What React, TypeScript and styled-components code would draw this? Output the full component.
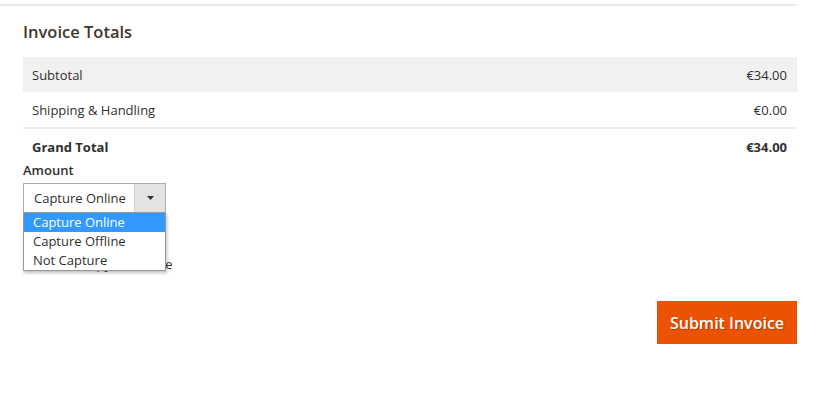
import styled, { createGlobalStyle } from "styled-components";

const GlobalStyle = createGlobalStyle`
  body {
    margin: 0;
    background: #ffffff;
    font-family: "Open Sans", "Liberation Sans", sans-serif;
    color: #303030;
  }
`;

const totals = [
  { label: "Subtotal", value: "€34.00", shaded: true },
  { label: "Shipping & Handling", value: "€0.00", shaded: false },
];

const options = ["Capture Online", "Capture Offline", "Not Capture"];

export default function App() {
  return (
    <>
      <GlobalStyle />
      <Page>
        <Section>
          <Title>Invoice Totals</Title>
          <Table>
            {totals.map((row) => (
              <Row key={row.label} $shaded={row.shaded}>
                <Cell>{row.label}</Cell>
                <Cell>{row.value}</Cell>
              </Row>
            ))}
            <Divider />
            <GrandRow>
              <Cell>Grand Total</Cell>
              <Cell>€34.00</Cell>
            </GrandRow>
          </Table>

          <Label>Amount</Label>
          <SelectWrap>
            <Select>
              <SelectText>Capture Online</SelectText>
              <Arrow>
                <svg width="7" height="4" viewBox="0 0 7 4">
                  <path d="M0 0 L7 0 L3.5 4 Z" fill="#333" />
                </svg>
              </Arrow>
            </Select>
            <Menu>
              {options.map((opt, i) => (
                <Option key={opt} $active={i === 0}>
                  {opt}
                </Option>
              ))}
            </Menu>
          </SelectWrap>

          <CheckLine>
            <Box />
            <span>Email Copy of Invoice</span>
          </CheckLine>

          <Actions>
            <SubmitButton>Submit Invoice</SubmitButton>
          </Actions>
        </Section>
      </Page>
    </>
  );
}

const Page = styled.div`
  width: 820px;
  height: 400px;
  overflow: hidden;
  padding-top: 4px;
  box-sizing: border-box;
`;

const Section = styled.div`
  width: 797px;
  border-top: 2px solid #e8e8e8;
  padding-left: 23px;
  box-sizing: border-box;
`;

const Title = styled.h2`
  margin: 16px 0 15px;
  font-size: 16.5px;
  line-height: 20px;
  font-weight: 600;
  color: #41362f;
`;

const Table = styled.div`
  display: flex;
  flex-direction: column;
`;

const Row = styled.div<{ $shaded: boolean }>`
  display: flex;
  justify-content: space-between;
  align-items: center;
  height: 35px;
  padding: 0 10px 0 9px;
  background: ${(p) => (p.$shaded ? "#f1f1f1" : "transparent")};
  font-size: 13px;
`;

const Divider = styled.div`
  height: 2px;
  background: #ececec;
`;

const GrandRow = styled(Row).attrs({ $shaded: false })`
  height: auto;
  padding-top: 9px;
  padding-bottom: 1px;
  line-height: 18px;
  font-weight: 700;
`;

const Cell = styled.span`
  line-height: 18px;
`;

const Label = styled.div`
  margin-top: 4px;
  font-size: 13px;
  line-height: 18px;
  font-weight: 600;
`;

const SelectWrap = styled.div`
  position: relative;
  width: 143px;
  margin-top: 4px;
`;

const Select = styled.div`
  display: flex;
  height: 30px;
  border: 1px solid #adadad;
  box-sizing: border-box;
  background: #fff;
  font-size: 13px;
`;

const SelectText = styled.div`
  flex: 1;
  display: flex;
  align-items: center;
  padding-left: 10px;
`;

const Arrow = styled.div`
  width: 30px;
  display: flex;
  align-items: center;
  justify-content: center;
  background: #e3e3e3;
  border-left: 1px solid #cfcfcf;
`;

const Menu = styled.div`
  position: absolute;
  top: 29px;
  left: 0;
  width: 143px;
  box-sizing: border-box;
  background: #fff;
  border: 1px solid #9a9a9a;
  box-shadow: 1px 2px 3px rgba(0, 0, 0, 0.25);
  z-index: 2;
`;

const Option = styled.div<{ $active: boolean }>`
  height: 19px;
  line-height: 19px;
  padding-left: 9px;
  font-size: 13px;
  color: ${(p) => (p.$active ? "#ffffff" : "#303030")};
  background: ${(p) => (p.$active ? "#3399ff" : "transparent")};
`;

const CheckLine = styled.label`
  display: flex;
  align-items: center;
  gap: 8px;
  margin-top: 42px;
  font-size: 13px;
  line-height: 18px;
`;

const Box = styled.span`
  width: 13px;
  height: 13px;
  border: 1px solid #adadad;
  box-sizing: border-box;
  background: #fff;
`;

const Actions = styled.div`
  display: flex;
  justify-content: flex-end;
  margin-top: 28px;
`;

const SubmitButton = styled.button`
  width: 140px;
  height: 43px;
  border: 1px solid #e65100;
  background: #eb5202;
  color: #ffffff;
  font-family: "Open Sans", "Liberation Sans", sans-serif;
  font-size: 16px;
  font-weight: 600;
  text-shadow: 1px 1px 1px rgba(0, 0, 0, 0.25);
  cursor: pointer;
`;
